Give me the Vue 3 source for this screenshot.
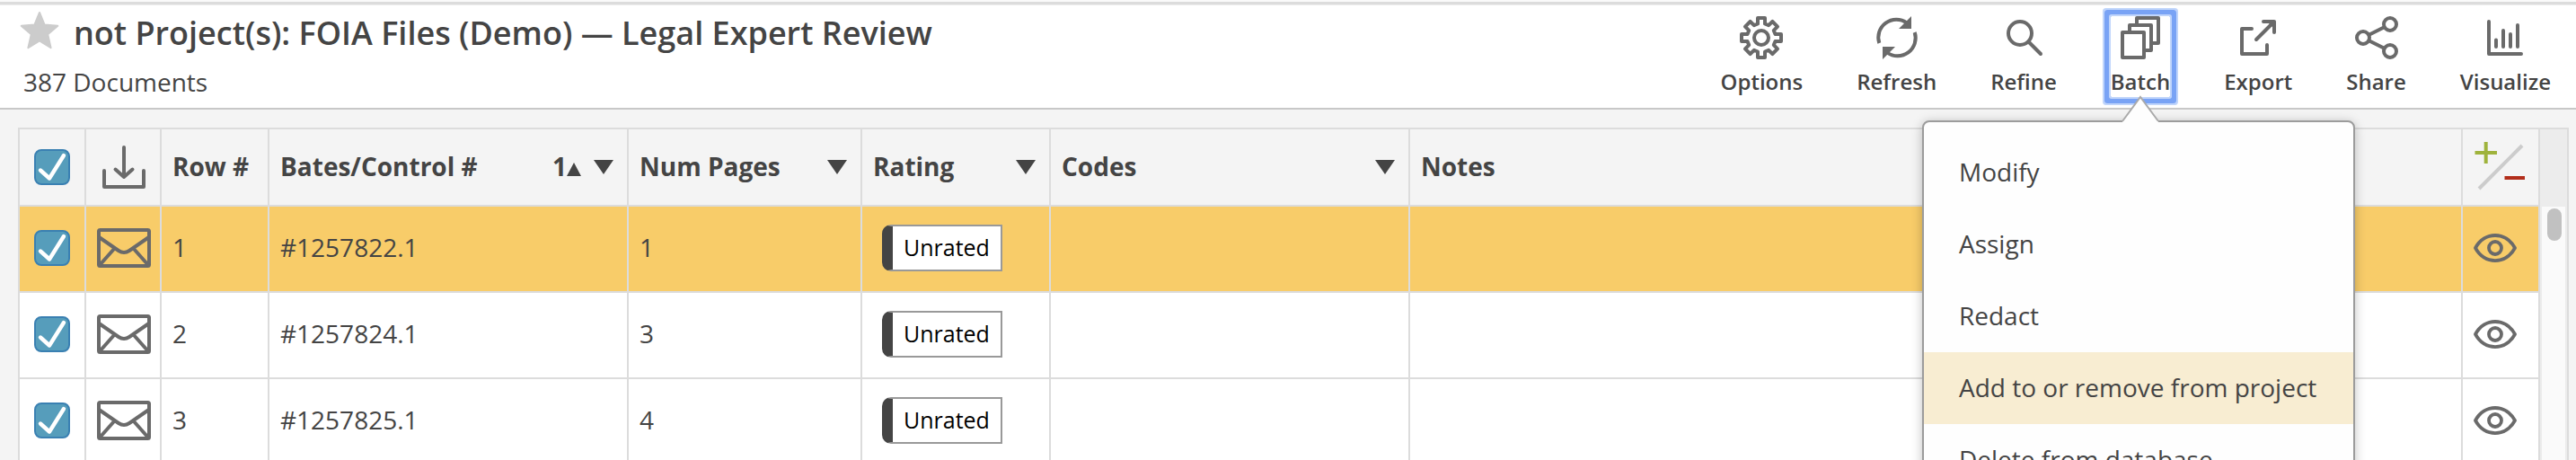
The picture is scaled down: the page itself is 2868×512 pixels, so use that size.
<script setup>
import { ref } from 'vue';

const tools = [
    { id: 'options', label: 'Options' },
    { id: 'refresh', label: 'Refresh' },
    { id: 'refine', label: 'Refine' },
    { id: 'batch', label: 'Batch' },
    { id: 'export', label: 'Export' },
    { id: 'share', label: 'Share' },
    { id: 'visualize', label: 'Visualize' },
];

const batchMenu = ['Modify', 'Assign', 'Redact', 'Add to or remove from project', 'Delete from database'];
const openTool = ref('batch');
const hovered = ref('Add to or remove from project');

const columns = [
    { title: 'Row #', cls: 'c-row' },
    { title: 'Bates/Control #', cls: 'c-bates', caret: true, sort: 1 },
    { title: 'Num Pages', cls: 'c-pages', caret: true },
    { title: 'Rating', cls: 'c-rating', caret: true },
    { title: 'Codes', cls: 'c-codes', caret: true },
    { title: 'Notes', cls: 'c-notes' },
];

const docs = ref([
    { row: 1, bates: '#1257822.1', pages: 1, rating: 'Unrated' },
    { row: 2, bates: '#1257824.1', pages: 3, rating: 'Unrated' },
    { row: 3, bates: '#1257825.1', pages: 4, rating: 'Unrated' },
]);
const current = ref(1);

// eight teeth around the center of a 48x48 box
function gearPath() {
    const pts = [];
    for (let i = 0; i < 8; i++) {
        const a = (i * Math.PI) / 4;
        const r = i % 2 ? 21.5 : 22;
        for (const [x, y] of [[-4, -15.5], [-4, -r], [4, -r], [4, -15.5]]) {
            const px = 24 + x * Math.cos(a) - y * Math.sin(a);
            const py = 24 + x * Math.sin(a) + y * Math.cos(a);
            pts.push(px.toFixed(2) + ' ' + py.toFixed(2));
        }
    }
    return 'M' + pts.join('L') + 'Z';
}
const gear = gearPath();
</script>

<template>
    <div class="page">
        <header class="top">
            <div class="heading">
                <div class="title-line">
                    <svg class="star" viewBox="0 0 44 44">
                        <path d="M22 2 L27.6 15.6 L42.3 16.8 L31.2 26.3 L34.6 41.2 L22 33.3 L9.4 41.2 L12.8 26.3 L1.7 16.8 L16.4 15.6 Z" />
                    </svg>
                    <h1>not Project(s): FOIA Files (Demo) — Legal Expert Review</h1>
                </div>
                <div class="count">387 Documents</div>
            </div>

            <nav class="tools">
                <div v-for="t in tools" :key="t.id" class="tool" :class="{ focused: openTool === t.id }">
                    <svg class="icon" viewBox="0 0 48 48">
                        <template v-if="t.id === 'options'">
                            <path :d="gear" />
                            <circle cx="24" cy="24" r="8" />
                        </template>
                        <template v-else-if="t.id === 'refresh'">
                            <path class="butt" d="M4.3 30 A20 20 0 0 1 35 7.5" />
                            <path class="butt" d="M43.7 18 A20 20 0 0 1 13 40.5" />
                            <path class="solid" d="M40 0 V14 H26 Z M8 48 V34 H22 Z" />
                        </template>
                        <template v-else-if="t.id === 'refine'">
                            <circle cx="20" cy="19" r="13" />
                            <path d="M29.5 28.5 L43 42" />
                        </template>
                        <template v-else-if="t.id === 'batch'">
                            <rect x="4" y="18" width="24" height="28" />
                            <path d="M12 17 V10 H36 V38 H29 M20 9 V2 H44 V30 H37" />
                        </template>
                        <template v-else-if="t.id === 'export'">
                            <path d="M17 14 H6 V42 H34 V32 M22 26 L42 6 M30 6 H42 V18" />
                            <path class="solid" d="M34 6 H42 V14 Z" />
                        </template>
                        <template v-else-if="t.id === 'share'">
                            <circle cx="39" cy="9" r="7" />
                            <circle cx="9" cy="24" r="7" />
                            <circle cx="39" cy="39" r="7" />
                            <path d="M15.5 20.8 L32.5 12.2 M15.5 27.2 L32.5 35.8" />
                        </template>
                        <template v-else>
                            <path d="M6 6 V42 H42 M14 26.5 V34 M22 16 V34 M30 20 V34 M38 10 V34" />
                        </template>
                    </svg>
                    <span class="tool-label">{{ t.label }}</span>

                    <div v-if="t.id === 'batch' && openTool === 'batch'" class="menu">
                        <svg class="pointer" viewBox="0 0 44 30">
                            <path class="pointer-fill" d="M2 29 L22 2 L42 29 V30 H2 Z" />
                            <path class="pointer-line" d="M2 29 L22 2 L42 29" />
                        </svg>
                        <div
                            v-for="item in batchMenu"
                            :key="item"
                            class="menu-item"
                            :class="{ active: hovered === item }"
                            @mouseenter="hovered = item"
                        >{{ item }}</div>
                    </div>
                </div>
            </nav>
        </header>

        <main class="results">
            <table>
                <colgroup>
                    <col class="c-check">
                    <col class="c-type">
                    <col v-for="c in columns" :key="c.cls" :class="c.cls">
                    <col class="c-view">
                </colgroup>
                <thead>
                    <tr>
                        <th>
                            <svg class="check" viewBox="0 0 40 40">
                                <rect x="1" y="1" width="38" height="38" rx="7" />
                                <path d="M7 23.5 L17 32.5 L33 7" />
                            </svg>
                        </th>
                        <th>
                            <svg class="icon download" viewBox="0 0 48 48">
                                <path d="M24 2 V35 M14.5 26.5 L24 35 L33.5 26.5 M2 28 V46 H46 V28" />
                            </svg>
                        </th>
                        <th v-for="c in columns" :key="c.cls">
                            <div class="head-cell">
                                <span class="head-title">{{ c.title }}</span>
                                <span v-if="c.sort" class="sort">{{ c.sort }}<svg viewBox="0 0 16 15"><path d="M8 0 L16 15 H0 Z" /></svg></span>
                                <svg v-if="c.caret" class="caret" viewBox="0 0 22 16"><path d="M0 0 H22 L11 16 Z" /></svg>
                            </div>
                        </th>
                        <th>
                            <svg class="plusminus" viewBox="0 0 60 56">
                                <path class="slash" d="M6 54 L54 6" />
                                <path class="plus" d="M1.5 14 H26 M13.7 2 V26" />
                                <path class="minus" d="M34.5 42 H57" />
                            </svg>
                        </th>
                    </tr>
                </thead>
                <tbody>
                    <tr v-for="d in docs" :key="d.row" :class="{ current: current === d.row }">
                        <td>
                            <svg class="check" viewBox="0 0 40 40">
                                <rect x="1" y="1" width="38" height="38" rx="7" />
                                <path d="M7 23.5 L17 32.5 L33 7" />
                            </svg>
                        </td>
                        <td>
                            <svg class="icon mail" viewBox="0 0 60 44">
                                <rect x="2" y="2" width="56" height="40" rx="1.5" />
                                <path d="M3 10.5 L24 25 Q30 29 36 25 L57 10.5 M19 23 L3 41 M41 23 L57 41" />
                            </svg>
                        </td>
                        <td class="text">{{ d.row }}</td>
                        <td class="text">{{ d.bates }}</td>
                        <td class="text">{{ d.pages }}</td>
                        <td><div class="rating">{{ d.rating }}</div></td>
                        <td></td>
                        <td></td>
                        <td>
                            <svg class="icon eye" viewBox="0 0 48 32">
                                <path d="M2 16 C12 -2.7 36 -2.7 46 16 C36 34.7 12 34.7 2 16 Z" />
                                <circle cx="24" cy="16" r="7" />
                            </svg>
                        </td>
                    </tr>
                </tbody>
            </table>
            <div class="scroll">
                <div class="scroll-head"></div>
                <div class="scroll-track"><div class="scroll-thumb"></div></div>
            </div>
        </main>
    </div>
</template>

<style>
body {
    margin: 0;
    overflow: hidden;
}
</style>

<style scoped>
.page {
    box-sizing: border-box;
    width: 2868px;
    height: 512px;
    overflow: hidden;
    background: #f4f4f4;
    color: #444;
    font-family: "Open Sans", "Noto Sans", sans-serif;
    font-size: 28px;
}

.page * {
    box-sizing: border-box;
}

.top {
    display: flex;
    justify-content: space-between;
    height: 122px;
    padding: 0 28px 0 22px;
    background: linear-gradient(#fafafa 2px, #dcdcdc 2px, #dcdcdc 5px, #eee 5px, #eee 6px, #fff 6px);
    border-bottom: 2px solid #c8c8c8;
}

.title-line {
    display: flex;
    gap: 16px;
    padding-top: 12px;
}

.star {
    width: 44px;
    height: 44px;
    fill: #ccc;
    stroke: #ccc;
    stroke-width: 2;
    stroke-linejoin: round;
}

h1 {
    margin: 1px 0 -1px;
    font-size: 36px;
    font-weight: 600;
    line-height: 48px;
    white-space: nowrap;
}

.count {
    padding-left: 4px;
    margin-top: 12px;
    line-height: 38px;
}

.tools {
    display: flex;
    gap: 60px;
    padding-top: 18px;
}

.tool {
    position: relative;
    display: flex;
    flex-direction: column;
    align-items: center;
    height: 90px;
}

.tool.focused {
    border-radius: 1px;
    box-shadow: 0 0 0 2px #c0d5fb, 0 0 0 7px #79a3f5, 0 0 0 9px #c0d5fb;
}

.icon {
    display: block;
    width: 48px;
    height: 48px;
    flex: none;
    fill: none;
    stroke: #6a6a6a;
    stroke-width: 4;
    stroke-linecap: round;
    stroke-linejoin: round;
}

.icon .butt {
    stroke-linecap: butt;
}

.icon .solid {
    fill: #6a6a6a;
    stroke: none;
}

.tool-label {
    margin-top: 8px;
    font-size: 24px;
    font-weight: 600;
    line-height: 34px;
}

.menu {
    position: absolute;
    top: 116px;
    left: calc(50% - 243px);
    z-index: 5;
    width: 482px;
    padding-top: 16px;
    background: #fefefe;
    border: 2px solid #9c9c9c;
    border-radius: 8px;
    box-shadow: 0 2px 12px rgba(0, 0, 0, 0.25);
}

.pointer {
    position: absolute;
    top: -30px;
    left: 219px;
    width: 44px;
    height: 30px;
}

.pointer-fill {
    fill: #fefefe;
}

.pointer-line {
    fill: none;
    stroke: #aaa;
    stroke-width: 2;
}

.menu-item {
    height: 80px;
    padding: 0 38px 0 39px;
    line-height: 78px;
    white-space: nowrap;
}

.menu-item.active {
    background: #f8edd2;
}

.results {
    display: flex;
    width: 2840px;
    margin: 20px 0 0 20px;
    border: 2px solid #dcdcdc;
    border-bottom: 0;
}

table {
    width: 2806px;
    table-layout: fixed;
    border-spacing: 0;
}

.c-check { width: 74px; }
.c-type { width: 84px; }
.c-row { width: 120px; }
.c-bates { width: 400px; }
.c-pages { width: 260px; }
.c-rating { width: 210px; }
.c-codes { width: 400px; }
.c-notes { width: 1172px; }
.c-view { width: 86px; }

th,
td {
    padding: 0 0 0 12px;
    border-right: 2px solid #dcdcdc;
    border-bottom: 2px solid #dcdcdc;
    text-align: left;
    vertical-align: middle;
}

th {
    height: 86px;
    background: #f4f4f4;
    font-weight: 700;
}

td {
    height: 96px;
    padding-bottom: 2px;
    background: #fff;
}

td.text {
    padding-bottom: 4px;
}

.current td {
    background: #f8cc69;
}

.head-cell {
    display: flex;
    align-items: center;
    padding-right: 15px;
}

.head-title {
    flex: 1;
    line-height: 36px;
    padding-bottom: 2px;
    white-space: nowrap;
}

.sort {
    display: flex;
    align-items: baseline;
    margin-right: 14px;
    padding-bottom: 2px;
    line-height: 36px;
}

.sort svg {
    width: 16px;
    height: 15px;
    fill: #444;
}

.caret {
    width: 22px;
    height: 16px;
    fill: #444;
}

.check {
    display: block;
    width: 40px;
    height: 40px;
    margin-left: 4px;
}

.check rect {
    fill: #569dbb;
    stroke: #3a80b2;
    stroke-width: 2;
}

.check path {
    fill: none;
    stroke: #fff;
    stroke-width: 4.4;
    stroke-linecap: round;
    stroke-linejoin: round;
}

.download {
    margin-left: 6px;
}

.mail {
    width: 60px;
    height: 44px;
}

.eye {
    height: 32px;
    stroke-width: 3.8;
}

.plusminus {
    display: block;
    width: 60px;
    height: 56px;
    margin-bottom: 4px;
    fill: none;
    stroke-width: 4;
}

.slash { stroke: #ccc; }
.plus { stroke: #9fb33c; }
.minus { stroke: #b22d1a; }

.rating {
    width: 134px;
    height: 52px;
    margin-left: 10px;
    padding-left: 12px;
    border: 2px solid #999;
    border-left: 12px solid #444;
    border-radius: 10px 0 0 10px;
    background: #fff;
    color: #000;
    font-size: 25px;
    line-height: 46px;
}

.scroll {
    display: flex;
    flex-direction: column;
    width: 30px;
}

.scroll-head {
    height: 86px;
    background: #ececec;
}

.scroll-track {
    flex: 1;
    padding: 2px 0 0 6px;
    background: #fafafa;
    border-left: 2px solid #ececec;
    border-right: 2px solid #ececec;
}

.scroll-thumb {
    width: 16px;
    height: 36px;
    border-radius: 8px;
    background: #c1c1c1;
}
</style>
